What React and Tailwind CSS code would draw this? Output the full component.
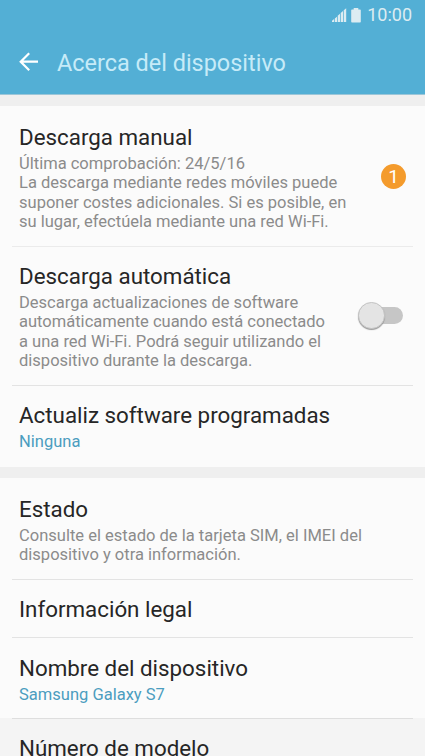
const manualLines = [
  "Última comprobación: 24/5/16",
  "La descarga mediante redes móviles puede",
  "suponer costes adicionales. Si es posible, en",
  "su lugar, efectúela mediante una red Wi-Fi.",
];

const autoLines = [
  "Descarga actualizaciones de software",
  "automáticamente cuando está conectado",
  "a una red Wi-Fi. Podrá seguir utilizando el",
  "dispositivo durante la descarga.",
];

const statusLines = [
  "Consulte el estado de la tarjeta SIM, el IMEI del",
  "dispositivo y otra información.",
];

function StatusBar() {
  return (
    <div className="flex h-[30px] items-center justify-end pr-[13px] text-[#dcecf2]">
      <svg width="15" height="15" viewBox="0 0 15 15" fill="currentColor" className="mr-1">
        <path d="M0 14v-1.2L2.1 11.1V14zM2.8 14v-3.6l2.2-1.7V14zM5.7 14V7.8l2.3-2V14zM8.7 14V4.9l2.3-2V14zM11.7 14V2.3L14.2 .2V14z" />
      </svg>
      <svg width="10" height="15" viewBox="0 0 10 15" fill="currentColor" className="mr-[6px]">
        <path d="M2.7 0h4.6v1.5H9q.8 0 .8.8V13.7q0 .8-.8.8H1q-.8 0-.8-.8V2.3q0-.8.8-.8h1.7z" />
      </svg>
      <span className="text-[18px] leading-none">10:00</span>
    </div>
  );
}

function Item({ title, lines = [], accent, children }) {
  return (
    <div className="flex items-center justify-between pl-[7px]">
      <div>
        <h2 className="text-[22.35px] leading-[26px] whitespace-nowrap text-[#262626]">{title}</h2>
        {lines.length > 0 && (
          <div className={accent ? "pt-[4px] text-[#4b9dbf]" : "pt-[4px] text-[#8b8b8b]"}>
            {lines.map((line) => (
              <p key={line} className="text-[16.53px] leading-[19.4px] whitespace-nowrap">
                {line}
              </p>
            ))}
          </div>
        )}
      </div>
      {children}
    </div>
  );
}

export default function App() {
  return (
    <div className="h-[756px] w-[425px] overflow-hidden bg-[#fbfbfb] font-['Roboto',sans-serif]">
      <header className="h-[95px] border-b border-[#9cc6d8] bg-[#53afd5]">
        <StatusBar />
        <div className="flex h-[64px] items-center pl-[19px]">
          <svg width="20" height="20" viewBox="0 0 20 20" fill="none" stroke="white" strokeWidth="2.2" className="mr-[18px]">
            <path d="M10.2 1.2 1.7 9.7l8.5 8.5M1.7 9.7H19" />
          </svg>
          <h1 className="pt-[2px] text-[23.45px] leading-[28px] text-[#c6ebf8]">Acerca del dispositivo</h1>
        </div>
      </header>

      <div className="h-[11px] bg-[#efefef]" />
      <section className="px-3">
        <div className="h-[141px] border-b border-[#ebebeb] pt-[18px]">
          <Item title="Descarga manual" lines={manualLines}>
            <span className="mt-[-3px] mr-[7px] flex size-[25px] items-center justify-center rounded-full bg-[#f49b2c] text-[19px] leading-none text-white">
              1
            </span>
          </Item>
        </div>
        <div className="h-[139px] border-b border-[#e3e3e3] pt-[16px]">
          <Item title="Descarga automática" lines={autoLines}>
            <button className="-mt-[3px] mr-[10px] flex h-[28px] w-[45px] items-center">
              <span className="z-10 size-[27px] shrink-0 rounded-full border border-[#c4c4c4] bg-[#e4e4e4] shadow-[0_1px_1px_#999]" />
              <span className="-ml-3 h-[17px] w-[30px] rounded-r-full bg-[#c6c6c6]" />
            </button>
          </Item>
        </div>
        <div className="h-[81px] pt-[16px]">
          <Item title="Actualiz software programadas" lines={["Ninguna"]} accent />
        </div>
      </section>

      <div className="h-[11px] bg-[#efefef]" />
      <section className="px-3">
        <div className="h-[102px] border-b border-[#e3e3e3] pt-[18px]">
          <Item title="Estado" lines={statusLines} />
        </div>
        <div className="h-[58px] border-b border-[#e3e3e3] pt-[16px]">
          <Item title="Información legal" />
        </div>
        <div className="h-[80px] pt-[17px]">
          <Item title="Nombre del dispositivo" lines={["Samsung Galaxy S7"]} accent />
        </div>
      </section>
      <section className="h-[38px] bg-[#f4f4f4] px-3">
        <div className="border-t border-[#dedede] pt-[16px]">
          <Item title="Número de modelo" />
        </div>
      </section>
    </div>
  );
}
